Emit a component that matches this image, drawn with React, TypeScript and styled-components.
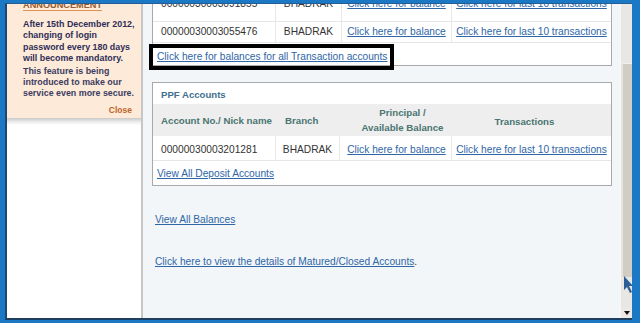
import React from "react";
import styled, { createGlobalStyle } from "styled-components";

const Global = createGlobalStyle`
  html, body { margin: 0; padding: 0; background: #1b78c4; }
  body { font-family: "Liberation Sans", Arial, sans-serif; }
  * { box-sizing: border-box; }
`;

const Frame = styled.div`
  position: relative;
  width: 640px;
  height: 323px;
  padding: 3px 8px 3px 5px;
  background: #1b78c4;
  display: flex;
  overflow: hidden;
`;

const Inner = styled.div`
  flex: 1;
  min-width: 0;
  display: flex;
  border-left: 2px solid #1d4670;
  border-top: 1px solid #235d94;
  border-bottom: 2px solid #1f3f60;
  overflow: hidden;
`;

const Sidebar = styled.aside`
  width: 136px;
  flex: none;
  background: #ffffff;
  border-right: 2px solid #c6c6c6;
  display: flex;
  flex-direction: column;
`;

const Announcement = styled.div`
  background: #fdead8;
  padding: 0 6px 2px 16px;
  font-weight: bold;
`;

const AnnTitle = styled.div`
  display: block;
  width: fit-content;
  margin-top: -4px;
  font-size: 9.2px;
  line-height: 10px;
  color: #9b5a2d;
  border-bottom: 1px solid #e09050;
`;

const AnnText = styled.p<{ $soft?: boolean; $gap: number }>`
  margin: ${(p) => p.$gap}px 0 0;
  font-size: 8.9px;
  line-height: ${(p) => (p.$soft ? 11.3 : 11.4)}px;
  white-space: nowrap;
  color: ${(p) => (p.$soft ? "#3c3c62" : "#2e2e58")};
`;

const CloseLink = styled.div`
  margin: 5px 3px 0 0;
  text-align: right;
  font-size: 8.5px;
  line-height: 11px;
  color: #bf6428;
`;

const PanelShadow = styled.div`
  height: 7px;
  background: linear-gradient(to bottom, #c9c9c9, #ececec 55%, #ffffff);
`;

const Main = styled.main`
  flex: 1;
  min-width: 0;
  background: #f3f6f8;
  padding: 0 8px 0 9px;
  overflow: hidden;
  font-size: 10.2px;
  color: #333333;
`;

const Box = styled.section<{ $top: number }>`
  margin-top: ${(p) => p.$top}px;
  background: #ffffff;
  border: 1px solid #a9a9a9;
`;

const Row = styled.div<{ $cols: string; $h: number; $bg?: string; $line?: boolean }>`
  display: grid;
  grid-template-columns: ${(p) => p.$cols};
  height: ${(p) => p.$h}px;
  background: ${(p) => p.$bg || "#ffffff"};
  border-bottom: ${(p) => (p.$line ? "1px solid #e6e6e6" : "none")};
`;

const Cell = styled.div<{ $align?: "left" | "center"; $pad?: string; $top?: boolean; $divider?: boolean }>`
  display: flex;
  align-items: ${(p) => (p.$top ? "flex-start" : "center")};
  justify-content: ${(p) => (p.$align === "left" ? "flex-start" : "center")};
  text-align: ${(p) => p.$align || "center"};
  padding: ${(p) => p.$pad || "0"};
  line-height: 12px;
  white-space: nowrap;
  border-right: ${(p) => (p.$divider ? "1px solid #e8e8e8" : "none")};
`;

const HeadCell = styled(Cell)`
  font-weight: bold;
  font-size: 9.7px;
  line-height: 15px;
  color: #4a7571;
`;

const Link = styled.a`
  color: #2e66a6;
  text-decoration: underline;
  cursor: pointer;
`;

const LinkRow = styled.div<{ $pad: string }>`
  position: relative;
  padding: ${(p) => p.$pad};
  line-height: 12px;
`;

const Highlight = styled.div`
  position: absolute;
  left: -4px;
  top: 1px;
  width: 245px;
  height: 26px;
  border: 4px solid #000000;
  pointer-events: none;
`;

const BoxTitle = styled.h3`
  margin: 0;
  height: 21px;
  padding: 2px 0 0 8px;
  line-height: 19px;
  font-size: 9.6px;
  font-weight: bold;
  color: #3f6f90;
`;

const PlainLine = styled.div<{ $top: number }>`
  margin: ${(p) => p.$top}px 0 0 3px;
  line-height: 12px;
`;

const Scrollbar = styled.div`
  width: 12px;
  flex: none;
  display: flex;
  flex-direction: column;
  background: #e9e7e3;
  border-left: 1px solid #f7f7f7;
`;

const Track = styled.div<{ $h?: number }>`
  height: ${(p) => (p.$h ? `${p.$h}px` : "auto")};
  flex: ${(p) => (p.$h ? "none" : "1")};
  background: #e9e7e3;
`;

const Thumb = styled.div`
  height: 214px;
  flex: none;
  background: #d1cdc5;
  border-left: 2px solid #e6e4df;
  border-top: 1px solid #f2f1ee;
`;

const DownButton = styled.div`
  height: 10px;
  flex: none;
  display: flex;
  align-items: center;
  justify-content: center;
  background: #ece9e4;
  &::after {
    content: "";
    border-left: 3px solid transparent;
    border-right: 3px solid transparent;
    border-top: 4px solid #111111;
  }
`;

const Cursor = styled.svg`
  position: absolute;
  left: 623px;
  top: 276px;
`;

const TX_COLS = "123px 66px 110px 1fr";
const PPF_COLS = "123px 64px 112px 1fr";

export default function App() {
  return (
    <>
      <Global />
      <Frame>
        <Inner>
          <Sidebar>
            <Announcement>
              <AnnTitle>ANNOUNCEMENT</AnnTitle>
              <AnnText $gap={8}>
                After 15th December 2012,<br />
                changing of login<br />
                password every 180 days<br />
                will become mandatory.
              </AnnText>
              <AnnText $soft $gap={1}>
                This feature is being<br />
                introduced to make our<br />
                service even more secure.
              </AnnText>
              <CloseLink>Close</CloseLink>
            </Announcement>
            <PanelShadow />
          </Sidebar>

          <Main>
            <Box $top={-7}>
              <Row $cols={TX_COLS} $h={24} $line>
                <Cell $align="left" $pad="0 0 0 8px" $top $divider>00000030003091855</Cell>
                <Cell $top $divider>BHADRAK</Cell>
                <Cell $top $divider><Link>Click here for balance</Link></Cell>
                <Cell $top><Link>Click here for last 10 transactions</Link></Cell>
              </Row>
              <Row $cols={TX_COLS} $h={21} $line>
                <Cell $align="left" $pad="0 0 0 8px" $divider>00000030003055476</Cell>
                <Cell $divider>BHADRAK</Cell>
                <Cell $divider><Link>Click here for balance</Link></Cell>
                <Cell><Link>Click here for last 10 transactions</Link></Cell>
              </Row>
              <LinkRow $pad="8px 0 2px 4px">
                <Link>Click here for balances for all Transaction accounts</Link>
                <Highlight />
              </LinkRow>
            </Box>

            <Box $top={16}>
              <BoxTitle>PPF Accounts</BoxTitle>
              <Row $cols={PPF_COLS} $h={32} $bg="#eeeeee">
                <HeadCell $align="left" $pad="0 0 0 8px">Account No./ Nick name</HeadCell>
                <HeadCell $align="left" $pad="0 0 0 9px">Branch</HeadCell>
                <HeadCell $pad="0 0 0 13px">Principal /<br />Available Balance</HeadCell>
                <HeadCell $pad="3px 14px 0 0">Transactions</HeadCell>
              </Row>
              <Row $cols={PPF_COLS} $h={25} $line>
                <Cell $align="left" $pad="3px 0 0 8px" $divider>00000030003201281</Cell>
                <Cell $pad="3px 0 0 0" $divider>BHADRAK</Cell>
                <Cell $pad="3px 0 0 2px" $divider><Link>Click here for balance</Link></Cell>
                <Cell $pad="3px 0 0 0"><Link>Click here for last 10 transactions</Link></Cell>
              </Row>
              <LinkRow $pad="7px 0 5px 4px">
                <Link>View All Deposit Accounts</Link>
              </LinkRow>
            </Box>

            <PlainLine $top={28}>
              <Link>View All Balances</Link>
            </PlainLine>
            <PlainLine $top={30}>
              <Link>Click here to view the details of Matured/Closed Accounts</Link>.
            </PlainLine>
          </Main>

          <Scrollbar>
            <Track $h={59} />
            <Thumb />
            <Track />
            <DownButton />
          </Scrollbar>
        </Inner>
        <Cursor width="11" height="18" viewBox="0 0 11 18">
          <polygon points="1,0 1,14 4,11 7,17 9,16 6,10 10,10" fill="#2b5f96" />
        </Cursor>
      </Frame>
    </>
  );
}
